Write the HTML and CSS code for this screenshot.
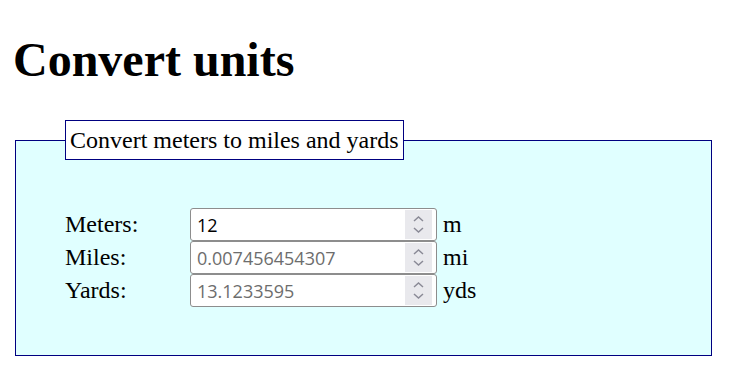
FILE: index.html
```html
<!DOCTYPE html>
<html lang="en">
<head>
    <meta charset="UTF-8">
    <title>Convert units</title>
    <link rel="stylesheet" href="styles.css">
</head>
<body>
    <h1>Convert units</h1>

    <fieldset class="converter">
        <legend>Convert meters to miles and yards</legend>

        <div class="rows">
            <label for="meters">Meters:</label>
            <div class="field">
                <input type="text" id="meters" value="12">
                <span class="spin"><svg viewBox="0 0 27 29" width="27" height="29"><path d="M9 11 L13.5 7 L18 11 M9 18 L13.5 22 L18 18" fill="none" stroke="#8a8a96" stroke-width="1.5"/></svg></span>
            </div>
            <span class="unit">m</span>

            <label for="miles">Miles:</label>
            <div class="field">
                <input type="text" id="miles" value="0.007456454307" readonly>
                <span class="spin"><svg viewBox="0 0 27 29" width="27" height="29"><path d="M9 11 L13.5 7 L18 11 M9 18 L13.5 22 L18 18" fill="none" stroke="#8a8a96" stroke-width="1.5"/></svg></span>
            </div>
            <span class="unit">mi</span>

            <label for="yards">Yards:</label>
            <div class="field">
                <input type="text" id="yards" value="13.1233595" readonly>
                <span class="spin"><svg viewBox="0 0 27 29" width="27" height="29"><path d="M9 11 L13.5 7 L18 11 M9 18 L13.5 22 L18 18" fill="none" stroke="#8a8a96" stroke-width="1.5"/></svg></span>
            </div>
            <span class="unit">yds</span>
        </div>
    </fieldset>
</body>
</html>
```

FILE: styles.css
```css
body {
    margin: 8px;
    font-family: "Liberation Serif", "Times New Roman", serif;
    font-size: 24px;
    color: #000;
    background: #fff;
}

h1 {
    font-size: 48px;
    margin: 24px 0 33px 5px;
}

.converter {
    margin: 0 10px 0 7px;
    padding: 48px 0 48px 49px;
    border: 1px solid #000080;
    background-color: #e0ffff; /* lightcyan */
}

legend {
    padding: 6px 4px 5px;
    border: 1px solid #000080;
    background-color: #fff;
}

.rows {
    display: grid;
    grid-template-columns: 119px 247px auto;
    grid-auto-rows: 33px;
    align-items: center;
    column-gap: 6px;
}

.field {
    position: relative;
    height: 33px;
}

.field input {
    box-sizing: border-box;
    width: 247px;
    height: 33px;
    margin: 0;
    padding: 0 6px;
    border: 1px solid #8d8d8d;
    border-radius: 3px;
    background: #fff;
    font-family: "Open Sans", "Noto Sans", sans-serif;
    font-size: 18px;
    color: #000;
    outline: none;
}

.field input[readonly] {
    color: #6d6d6d;
}

/* spinner drawn over the input */
.spin {
    position: absolute;
    top: 2px;
    right: 5px;
    width: 27px;
    height: 29px;
    background-color: #e9e9ed;
}

.spin svg {
    display: block;
}
```
